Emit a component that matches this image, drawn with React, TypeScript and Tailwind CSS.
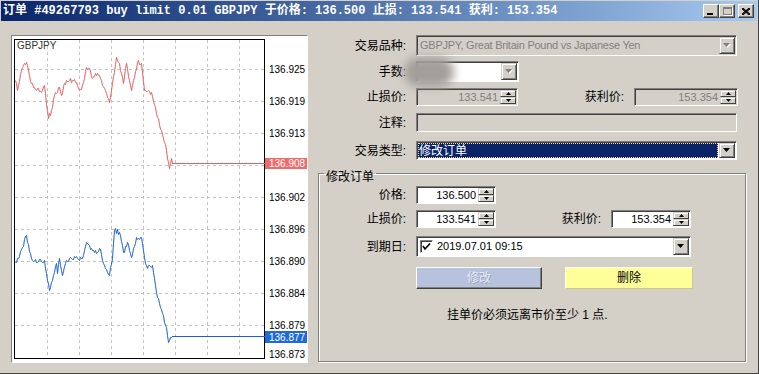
import type { ReactNode } from 'react'

const UI = "font-['Liberation_Sans','Noto_Sans_CJK_SC',sans-serif]"

const RED: [number, number][] = [
  [16, 80], [18, 90], [23, 67], [27, 62], [32, 83], [37, 90], [43, 90], [45, 85], [49, 118],
  [53, 107], [55, 95], [60, 87], [62, 95], [65, 83], [70, 80], [77, 82], [80, 90], [83, 85],
  [87, 67], [90, 68], [93, 78], [98, 73], [102, 80], [107, 93], [110, 102], [113, 83], [117, 57],
  [120, 63], [124, 83], [127, 63], [132, 90], [135, 77], [138, 62], [142, 63], [145, 90],
  [152, 92], [157, 113], [162, 130], [167, 150], [170, 168], [172, 158], [173, 163],
]

const BLUE: [number, number][] = [
  [16, 262], [18, 258], [23, 247], [27, 235], [32, 258], [37, 262], [45, 260], [50, 290],
  [53, 280], [57, 263], [58, 273], [60, 258], [63, 275], [67, 260], [72, 258], [83, 258],
  [87, 242], [92, 248], [97, 253], [100, 248], [105, 265], [110, 275], [113, 258], [115, 230],
  [120, 232], [124, 252], [128, 242], [132, 257], [137, 237], [142, 237], [145, 257],
  [148, 268], [153, 265], [158, 297], [163, 313], [167, 327], [169, 342], [171, 337], [173, 336],
]

// tick-chart look: interpolate every pixel and add a little deterministic jitter
function jagged(pts: [number, number][], seed: number) {
  const out: string[] = []
  for (let i = 0; i < pts.length - 1; i++) {
    const [x0, y0] = pts[i]
    const [x1, y1] = pts[i + 1]
    for (let x = x0; x < x1; x++) {
      const t = (x - x0) / (x1 - x0)
      const h = Math.sin(x * 12.9898 + seed) * 43758.5453
      const r = h - Math.floor(h)
      const dy = x === x0 || x > 168 ? 0 : Math.round((r - 0.5) * 5)
      out.push(`${x + 0.5},${Math.round(y0 + (y1 - y0) * t) + dy + 0.5}`)
    }
  }
  const last = pts[pts.length - 1]
  out.push(`${last[0] + 0.5},${last[1] + 0.5}`)
  return out.join(' ')
}

const GRID_X = [48, 80, 112, 144, 176, 208, 240]
const GRID_Y = [69, 101, 133, 165, 197, 229, 261, 293, 325]
const LABELS: [string, number][] = [
  ['136.925', 69],
  ['136.919', 101],
  ['136.913', 133],
  ['136.902', 197],
  ['136.896', 229],
  ['136.890', 261],
  ['136.884', 293],
  ['136.879', 325],
  ['136.873', 354],
]

function Chart() {
  return (
    <div className="w-[297px] h-[328px] bg-white border border-t-[#808080] border-l-[#808080] border-r-white border-b-white">
      <svg width="295" height="326" viewBox="13 36 295 326" className="block">
        {GRID_X.map((x) => (
          <line key={x} x1={x + 0.5} y1={40} x2={x + 0.5} y2={358} stroke="#c4c4c4" strokeDasharray="3 3" />
        ))}
        {GRID_Y.map((y) => (
          <line key={y} x1={16} y1={y + 0.5} x2={265} y2={y + 0.5} stroke="#c4c4c4" strokeDasharray="3 3" />
        ))}
        <rect x={15.5} y={39.5} width={250} height={319} fill="none" stroke="#000" />
        <text x={18} y={49} fontSize="10" fill="#333" fontFamily="Liberation Sans, sans-serif">
          GBPJPY
        </text>
        <polyline points={jagged(RED, 1)} fill="none" stroke="#ea5c5c" />
        <line x1={173} y1={163.5} x2={266} y2={163.5} stroke="#ea5c5c" />
        <polyline points={jagged(BLUE, 7)} fill="none" stroke="#1660d6" />
        <line x1={173} y1={336.5} x2={266} y2={336.5} stroke="#1660d6" />
        {LABELS.map(([t, y]) => (
          <text key={t} x={270} y={y + 4} fontSize="10" fill="#000" fontFamily="Liberation Sans, sans-serif">
            {t}
          </text>
        ))}
        <rect x={266} y={158} width={42} height={11} fill="#f06a6a" />
        <text x={270} y={167} fontSize="10" fill="#fff" fontFamily="Liberation Sans, sans-serif">
          136.908
        </text>
        <rect x={266} y={331} width={42} height={12} fill="#1f6ad8" />
        <text x={270} y={341} fontSize="10" fill="#fff" fontFamily="Liberation Sans, sans-serif">
          136.877
        </text>
      </svg>
    </div>
  )
}

function Arrow({ dim = false }: { dim?: boolean }) {
  return (
    <svg width="8" height="5" viewBox="0 0 8 5">
      {dim && <polygon points="1,1 8,1 4.5,5" fill="#fff" />}
      <polygon points="0,0 7,0 3.5,4" fill={dim ? '#808080' : '#000'} />
    </svg>
  )
}

function DropBtn({ dim = false }: { dim?: boolean }) {
  return (
    <div className="w-[16px] h-full shrink-0 flex items-center justify-center bg-[#d4d0c8] border border-t-[#d4d0c8] border-l-[#d4d0c8] border-r-[#404040] border-b-[#404040] shadow-[inset_1px_1px_0_#fff,inset_-1px_-1px_0_#808080]">
      <Arrow dim={dim} />
    </div>
  )
}

function Spin() {
  return (
    <div className="w-[16px] h-full shrink-0 flex flex-col">
      <div className="flex-1 flex items-center justify-center bg-[#d4d0c8] border border-t-[#d4d0c8] border-l-[#d4d0c8] border-r-[#404040] border-b-[#404040] shadow-[inset_1px_1px_0_#fff]">
        <svg width="5" height="3" viewBox="0 0 5 3">
          <polygon points="2.5,0 5,3 0,3" fill="#000" />
        </svg>
      </div>
      <div className="flex-1 flex items-center justify-center bg-[#d4d0c8] border border-t-[#d4d0c8] border-l-[#d4d0c8] border-r-[#404040] border-b-[#404040] shadow-[inset_1px_1px_0_#fff]">
        <svg width="5" height="3" viewBox="0 0 5 3">
          <polygon points="0,0 5,0 2.5,3" fill="#000" />
        </svg>
      </div>
    </div>
  )
}

function Field({ className, white = false, children }: { className: string; white?: boolean; children?: ReactNode }) {
  return (
    <div
      className={`flex p-[1px] border border-t-[#808080] border-l-[#808080] border-r-white border-b-white shadow-[inset_1px_1px_0_#404040] ${white ? 'bg-white' : 'bg-[#d4d0c8]'} ${className}`}
    >
      {children}
    </div>
  )
}

function Label({ className, children }: { className: string; children: ReactNode }) {
  return <div className={`shrink-0 text-right text-[12px] leading-none pr-[10px] ${className}`}>{children}</div>
}

function SpinField({ value, white = false, className }: { value: string; white?: boolean; className: string }) {
  return (
    <Field className={className} white={white}>
      <div className={`flex-1 text-right pr-[2px] text-[11px] leading-none self-center ${white ? 'text-black' : 'text-[#808080]'}`}>
        {value}
      </div>
      <Spin />
    </Field>
  )
}

function TitleButton({ children }: { children: ReactNode }) {
  return (
    <div className="w-[16px] h-[14px] flex items-center justify-center bg-[#d4d0c8] border border-t-white border-l-white border-r-[#404040] border-b-[#404040] shadow-[inset_-1px_-1px_0_#808080]">
      {children}
    </div>
  )
}

export default function App() {
  return (
    <div className={`w-[759px] h-[374px] bg-[#d4d0c8] overflow-hidden flex flex-col border-r border-b border-r-[#404040] border-b-[#404040] ${UI}`}>
      <div className="h-[20px] mx-[1px] mt-[1px] shrink-0 flex items-center pl-[2px] pr-[3px] bg-gradient-to-r from-[#0a246a] to-[#a6caf0]">
        <span className="flex-1 text-white font-bold text-[12px] whitespace-nowrap font-['Liberation_Mono','Noto_Sans_CJK_SC',monospace]">
          订单 #49267793 buy limit 0.01 GBPJPY 于价格: 136.500 止损: 133.541 获利: 153.354
        </span>
        <div className="flex items-center">
          <TitleButton>
            <div className="w-[6px] h-[2px] bg-black mt-[6px] -ml-[2px]" />
          </TitleButton>
          <TitleButton>
            <div className="w-[9px] h-[8px] border border-t-2 border-[#808080] shadow-[1px_1px_0_#fff]" />
          </TitleButton>
          <div className="ml-[3px]">
            <TitleButton>
              <svg width="8" height="7" viewBox="0 0 8 7">
                <path d="M0 0 L8 7 M1 0 L8 6 M0 1 L7 7 M8 0 L0 7 M7 0 L0 6 M8 1 L1 7" stroke="#000" strokeWidth="1" />
              </svg>
            </TitleButton>
          </div>
        </div>
      </div>

      <div className="flex flex-1">
        <div className="ml-[11px] mt-[14px]">
          <Chart />
        </div>

        <div className="ml-[10px] mt-[14px] flex flex-col w-[430px] text-black">
          <div className="flex items-center h-[21px]">
            <Label className="w-[98px]">交易品种:</Label>
            <Field className="w-[321px] h-[21px]">
              <div className="flex-1 self-center pl-[2px] text-[11px] tracking-[-0.25px] leading-none text-[#808080] whitespace-nowrap">
                GBPJPY, Great Britain Pound vs Japanese Yen
              </div>
              <DropBtn dim />
            </Field>
          </div>

          <div className="flex items-center h-[21px] mt-[5px] relative">
            <Label className="w-[98px]">手数:</Label>
            <Field className="w-[103px] h-[21px]" white>
              <div className="flex-1" />
              <DropBtn dim />
            </Field>
            <div className="absolute left-[86px] top-[-4px] w-[50px] h-[30px] rounded-full bg-[#a29e9a] blur-[5px]" />
          </div>

          <div className="flex items-center h-[18px] mt-[6px]">
            <Label className="w-[98px]">止损价:</Label>
            <SpinField value="133.541" className="w-[102px] h-[18px]" />
            <Label className="w-[116px]">获利价:</Label>
            <SpinField value="153.354" className="w-[104px] h-[18px]" />
          </div>

          <div className="flex items-center h-[19px] mt-[7px]">
            <Label className="w-[98px]">注释:</Label>
            <Field className="w-[321px] h-[19px]" />
          </div>

          <div className="flex items-center h-[19px] mt-[9px]">
            <Label className="w-[98px]">交易类型:</Label>
            <Field className="w-[321px] h-[19px]" white>
              <div className="flex-1 flex items-center bg-[#0a246a] text-white text-[12px] leading-none pl-[1px] mr-[1px] outline outline-1 outline-dotted outline-offset-[-1px] outline-[#f5db95]">
                修改订单
              </div>
              <DropBtn />
            </Field>
          </div>

          <fieldset className="mt-[3px] w-[428px] h-[199px] border border-[#808080] shadow-[inset_1px_1px_0_#fff,1px_1px_0_#fff]">
            <legend className="ml-[5px] px-[2px] pt-[7px] text-[12px] leading-[14px]">修改订单</legend>

            <div className="flex items-center h-[18px] mt-[2px]">
              <Label className="w-[97px]">价格:</Label>
              <SpinField value="136.500" white className="w-[80px] h-[18px]" />
            </div>

            <div className="flex items-center h-[18px] mt-[6px]">
              <Label className="w-[97px]">止损价:</Label>
              <SpinField value="133.541" white className="w-[80px] h-[18px]" />
              <Label className="w-[115px]">获利价:</Label>
              <SpinField value="153.354" white className="w-[80px] h-[18px]" />
            </div>

            <div className="flex items-center h-[21px] mt-[8px]">
              <Label className="w-[97px]">到期日:</Label>
              <Field className="w-[275px] h-[21px]" white>
                <div className="self-center ml-[2px] w-[13px] h-[13px] flex items-center justify-center bg-white border border-t-[#808080] border-l-[#808080] border-r-white border-b-white shadow-[inset_1px_1px_0_#404040]">
                  <svg width="9" height="8" viewBox="0 0 9 8">
                    <path d="M1 3 L3 6 L8 0.5" fill="none" stroke="#000" strokeWidth="1.6" />
                  </svg>
                </div>
                <div className="flex-1 self-center pl-[4px] text-[11px] leading-none">2019.07.01 09:15</div>
                <DropBtn />
              </Field>
            </div>

            <div className="flex items-center h-[22px] mt-[10px]">
              <div className="w-[97px] shrink-0" />
              <div className="w-[126px] h-[22px] flex items-center justify-center bg-[#b7c3dd] border border-t-white border-l-white border-r-[#404040] border-b-[#404040] shadow-[inset_-1px_-1px_0_#808080] text-[12px] text-[#e6eaf3] [text-shadow:1px_1px_0_#97a3bd]">
                修改
              </div>
              <div className="ml-[23px] w-[128px] h-[22px] flex items-center justify-center bg-[#ffff99] border border-t-[#fffff0] border-l-[#fffff0] border-r-[#c8c890] border-b-[#c8c890] text-[12px]">
                删除
              </div>
            </div>

            <div className="mt-[18px] pl-[128px] text-[12px] leading-[16px]">挂单价必须远离市价至少 1 点.</div>
          </fieldset>
        </div>
      </div>
    </div>
  )
}
